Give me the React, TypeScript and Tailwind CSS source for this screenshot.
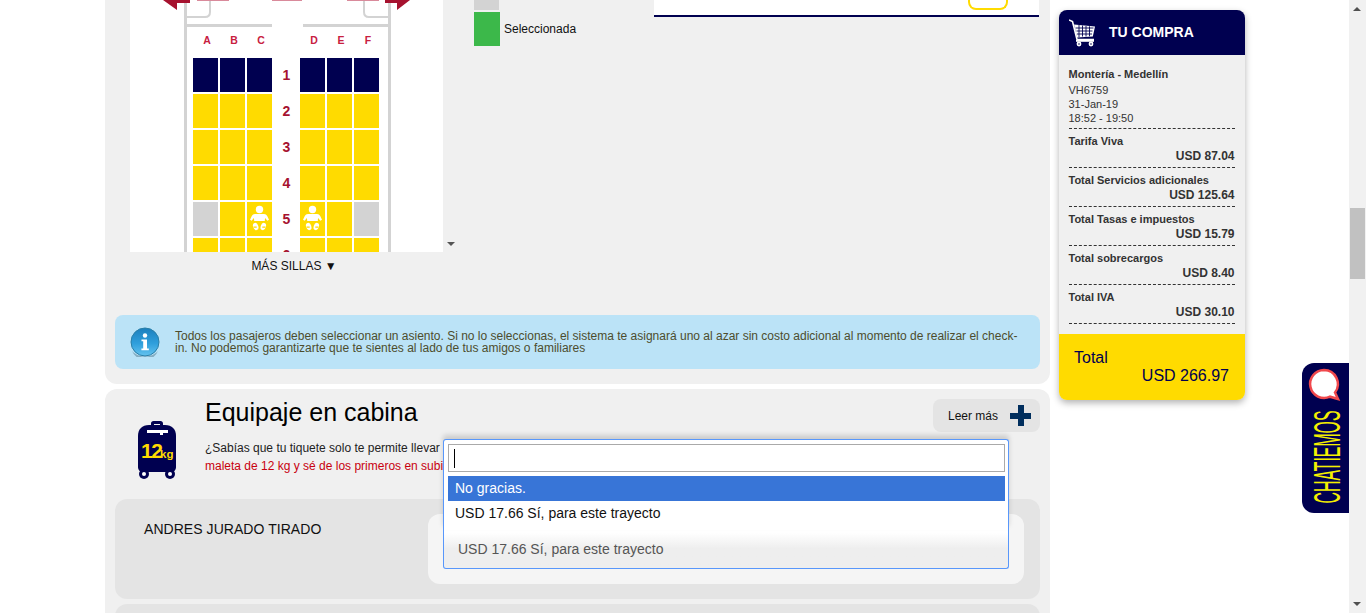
import React from 'react'

const NAVY = 'bg-[#000050]'

// Filas del mapa de sillas: n = azul, y = amarilla, g = gris, b = bebé
const rows = [
  { num: '1', seats: ['n', 'n', 'n', 'n', 'n', 'n'] },
  { num: '2', seats: ['y', 'y', 'y', 'y', 'y', 'y'] },
  { num: '3', seats: ['y', 'y', 'y', 'y', 'y', 'y'] },
  { num: '4', seats: ['y', 'y', 'y', 'y', 'y', 'y'] },
  { num: '5', seats: ['g', 'y', 'b', 'b', 'y', 'g'] },
  { num: '6', seats: ['y', 'y', 'y', 'y', 'y', 'y'] },
]

const totals = [
  { label: 'Tarifa Viva', value: 'USD 87.04' },
  { label: 'Total Servicios adicionales', value: 'USD 125.64' },
  { label: 'Total Tasas e impuestos', value: 'USD 15.79' },
  { label: 'Total sobrecargos', value: 'USD 8.40' },
  { label: 'Total IVA', value: 'USD 30.10' },
]

function Baby() {
  return (
    <svg width="25" height="34" viewBox="0 0 25 34" fill="white">
      <circle cx="12.500" cy="7.500" r="3.700" />
      <path d="M8 12h9c1.500 0 2.500.8 3.200 2l1.800 3.800-1.700.9-2.100-2.700c-.3 1.200-.4 2-.4 3H7.200c0-1-.1-1.800-.4-3l-2.100 2.700-1.700-.9L4.800 14C5.500 12.800 6.500 12 8 12z" />
      <ellipse cx="8.700" cy="24.500" rx="2.600" ry="3.800" transform="rotate(-18 8.700 24.500)" />
      <ellipse cx="16.300" cy="24.500" rx="2.600" ry="3.800" transform="rotate(18 16.300 24.500)" />
      <path d="M6.500 24.500h3.200v1.200H6.500zM15.300 24.500h3.200v1.200h-3.200z" fill="#ffdb00" />
    </svg>
  )
}

function Seat({ kind }: { kind: string }) {
  if (kind === 'n') return <div className="h-[34px] bg-[#000050]" />
  if (kind === 'g') return <div className="h-[34px] bg-[#d3d3d3]" />
  if (kind === 'b')
    return (
      <div className="h-[34px] bg-[#ffdb00]">
        <Baby />
      </div>
    )
  return <div className="h-[34px] bg-[#ffdb00]" />
}

function SeatMap() {
  return (
    <div className="h-[252px] w-[313px] shrink-0 overflow-hidden bg-white">
      {/* Cabecera del avión, cortada por el scroll */}
      <svg width="313" height="27" viewBox="0 0 313 27" className="block" fill="none">
        <path d="M55.500 0v27M259.500 0v27" stroke="#d3d3d3" strokeWidth="3" />
        <path d="M56 17h19c3 0 5-2 5-5V0M259 17h-20c-3 0-5-2-5-5V0" stroke="#d3d3d3" strokeWidth="2" />
        <path d="M55 25.500h87M173 25.500h86" stroke="#d3d3d3" strokeWidth="3" />
        <path d="M33 0l14 10V3h13V0z" fill="#a6122f" />
        <path d="M280 0l-13 10V3h-12V0z" fill="#a6122f" />
        <path d="M67 0h32v1H67zM142 0h30v1h-30zM217 0h32v1h-32z" fill="#d98a9b" />
      </svg>
      <div className="ml-[54px] w-[207px] border-x-[3px] border-[#d3d3d3] pl-[6px]">
        <div className="grid grid-cols-[25px_25px_25px_24px_25px_25px_25px] gap-[2px]">
          {['A', 'B', 'C', '', 'D', 'E', 'F'].map((l, i) => (
            <div key={i} className="flex h-[29px] items-center justify-center pb-[1px] pl-[3px] text-[10.500px] font-bold text-[#c8203f]">
              {l}
            </div>
          ))}
          {rows.map((r) => (
            <React.Fragment key={r.num}>
              {r.seats.slice(0, 3).map((s, i) => (
                <Seat key={i} kind={s} />
              ))}
              <div className="flex h-[34px] items-center justify-center pl-[1px] text-[14px] font-bold text-[#a6122f]">{r.num}</div>
              {r.seats.slice(3).map((s, i) => (
                <Seat key={i} kind={s} />
              ))}
            </React.Fragment>
          ))}
        </div>
      </div>
    </div>
  )
}

function Suitcase() {
  return (
    <svg width="38" height="58" viewBox="0 0 38 58" className="shrink-0">
      <path d="M13 5V2.500C13 1 14 0 15.500 0h7C24 0 25 1 25 2.500V5h-3V3h-6v2z" fill="#000050" />
      <path d="M11 4h16c7 0 11 4 11 11v31c0 3-2 5-5 5H5c-3 0-5-2-5-5V15C0 8 4 4 11 4z" fill="#000050" />
      <circle cx="6" cy="53" r="5" fill="#000050" />
      <circle cx="32" cy="53" r="5" fill="#000050" />
      <circle cx="6" cy="53" r="2" fill="white" />
      <circle cx="32" cy="53" r="2" fill="white" />
      <path d="M9 9h21v3h-5v2h-3v-2H9z" fill="white" />
      <text x="3" y="37" fill="#ffdb00" fontFamily="'Liberation Sans', sans-serif" fontSize="21" fontWeight="700" letterSpacing="-1.500">12</text>
      <text x="22" y="37" fill="#ffdb00" fontFamily="'Liberation Sans', sans-serif" fontSize="11.500" fontWeight="700">kg</text>
    </svg>
  )
}

function InfoIcon() {
  return (
    <svg width="30" height="30" viewBox="0 0 30 30" className="shrink-0">
      <defs>
        <linearGradient id="infoGrad" x1="0" y1="0" x2="0" y2="1">
          <stop offset="0" stopColor="#1c7fbd" />
          <stop offset="0.55" stopColor="#2f9fdc" />
          <stop offset="1" stopColor="#63c2ee" />
        </linearGradient>
      </defs>
      <circle cx="15" cy="15" r="14" fill="url(#infoGrad)" stroke="#2a7fa8" strokeWidth="1" />
      <path d="M2 24a14 14 0 0 0 26 0c-4 4-8 5.500-13 5.500S6 28 2 24z" fill="#50788c" opacity="0.5" />
      <circle cx="15" cy="8.500" r="2.200" fill="white" />
      <path d="M11.500 12.500h5.500v9h1.800v1.800h-7.400v-1.800h1.800v-7.200h-1.700z" fill="white" />
    </svg>
  )
}

function Cart() {
  return (
    <svg width="27" height="28" viewBox="0 0 27 28" fill="none" className="shrink-0">
      <path d="M0 1l3.500 1.500L8 20.500h17" stroke="white" strokeWidth="1.600" />
      <path d="M5 5.500l21 2-2.200 10L8 18.500z" fill="white" />
      <path d="M6.500 9h18M7.500 12h16M8 15h15M10 6v12M13.500 6.500v11M17 7v10.500M20.500 7.300v10" stroke="#000050" strokeWidth="0.900" />
      <rect x="7" y="21" width="18" height="1.800" fill="white" />
      <circle cx="10" cy="25" r="2.400" fill="white" />
      <circle cx="22" cy="25" r="2.400" fill="white" />
      <circle cx="10" cy="25" r="0.800" fill="#000050" />
      <circle cx="22" cy="25" r="0.800" fill="#000050" />
    </svg>
  )
}

function Purchase() {
  return (
    <aside className="mt-[10px] h-[390px] w-[186px] shrink-0 overflow-hidden rounded-lg bg-[#f0f0f0] shadow-[0_3px_7px_rgba(0,0,0,0.3)]">
      <div className={`flex h-[45px] items-center gap-[13px] pl-[10px] ${NAVY}`}>
        <Cart />
        <span className="text-[14px] font-bold text-white">TU COMPRA</span>
      </div>
      <div className="h-[279px] pl-[9.500px] pr-[10.500px] pt-[13px] text-[#333]">
        <div className="border-b border-dashed border-[#333] pb-[3px] text-[11px] leading-[14px]">
          <div className="mb-[2px] font-bold leading-[13px]">Montería - Medellín</div>
          <div>VH6759</div>
          <div>31-Jan-19</div>
          <div>18:52 - 19:50</div>
        </div>
        {totals.map((t) => (
          <div key={t.label} className="h-[39px] border-b border-dashed border-[#333] pt-[6px]">
            <div className="text-[11px] font-bold leading-[13px]">{t.label}</div>
            <div className="mt-[1px] text-right text-[12px] font-bold leading-[15px]">{t.value}</div>
          </div>
        ))}
      </div>
      <div className="h-[66px] bg-[#ffdb00] pl-[15px] pr-[16px] pt-[15px] text-[16px] leading-[18px] text-[#000050]">
        <div>Total</div>
        <div className="text-right">USD 266.97</div>
      </div>
    </aside>
  )
}

function SelectOverlay() {
  return (
    <div className="absolute bottom-[39px] left-0 right-0 z-10 h-[91px] rounded-t-[3px] border border-b-0 border-[#5897fb] bg-white pl-[4px] pr-[3px] pt-[4px] shadow-[0_-4px_5px_rgba(0,0,0,0.15)]">
      <div className="flex h-[28px] items-center border border-[#aaa] bg-white pl-[5px]">
        <span className="h-[19px] w-px bg-black" />
      </div>
      <div className="mt-[4px] flex h-[25px] items-center bg-[#3875d7] pl-[7px] text-[14px] text-white">No gracias.</div>
      <div className="flex h-[25px] items-center pl-[7px] text-[14px] text-[#111]">USD 17.66 Sí, para este trayecto</div>
    </div>
  )
}

export default function App() {
  return (
    <div className="flex h-[613px] overflow-hidden bg-white font-['Liberation_Sans',Arial,sans-serif]">
      <div className="relative flex flex-1 gap-[9px] pl-[105px]">
        <main className="flex w-[945px] shrink-0 flex-col gap-[5px]">
          <section className="h-[384px] shrink-0 rounded-b-xl bg-[#f0f0f0] px-[10px]">
            <div className="flex h-[252px] pl-[15px]">
              <SeatMap />
              <div className="relative w-[31px] shrink-0">
                <span className="absolute bottom-[6px] left-[4px] h-0 w-0 border-x-[4px] border-t-[4px] border-x-transparent border-t-[#555]" />
              </div>
              <div className="w-[180px] shrink-0">
                <div className="h-[10px] w-[25px] bg-[#d3d3d3]" />
                <div className="mt-[2px] flex items-center gap-[4px] text-[12px] text-[#111]">
                  <div className="h-[34px] w-[26px] bg-[#3cb84a]" />
                  Seleccionada
                </div>
              </div>
              <div className="mr-px h-[17px] flex-1 border-b-2 border-[#000050] bg-white pl-[314px]">
                <div className="h-[10px] w-[40px] rounded-b-lg border-2 border-t-0 border-[#ffdb00]" />
              </div>
            </div>
            <div className="w-[358px] pt-[7px] text-center text-[12px] leading-[14px] text-[#111]">MÁS SILLAS ▼</div>
            <div className="mt-[42px] flex h-[54px] items-center gap-[15px] rounded-lg bg-[#bbe3f7] px-[15px] text-[12px] leading-[12px] text-[#4d4d2d]">
              <InfoIcon />
              <p className="w-[850px]">
                Todos los pasajeros deben seleccionar un asiento. Si no lo seleccionas, el sistema te asignará uno al azar sin costo adicional al momento de realizar el check-in. No podemos garantizarte que te sientes al lado de tus amigos o familiares
              </p>
            </div>
          </section>

          <section className="flex-1 rounded-t-xl bg-[#f0f0f0] px-[10px] pt-[10px]">
            <div className="flex h-[100px]">
              <div className="w-[90px] shrink-0 pl-[23px] pt-[22px]">
                <Suitcase />
              </div>
              <div className="flex-1">
                <h2 className="text-[25px] leading-[26px] text-black">Equipaje en cabina</h2>
                <p className="mt-[14px] h-[36px] overflow-hidden text-[12px] leading-[18px] text-[#222]">
                  ¿Sabías que tu tiquete solo te permite llevar
                  <br />
                  <span className="text-[#c8000f]">maleta de 12 kg y sé de los primeros en subir</span>
                </p>
              </div>
              <div className="flex h-[33px] w-[107px] shrink-0 items-center justify-between rounded-lg bg-[#e4e4e4] pl-[15px] pr-[9px] text-[12px] text-[#111]">
                Leer más
                <span className="relative h-[21px] w-[21px]">
                  <span className="absolute left-[7.500px] top-0 h-[21px] w-[6px] bg-[#002e5d]" />
                  <span className="absolute left-0 top-[7.500px] h-[6px] w-[21px] bg-[#002e5d]" />
                </span>
              </div>
            </div>
            <div className="flex h-[100px] justify-between rounded-xl bg-[#e4e4e4] py-[15px] pl-[29px] pr-[16px]">
              <div className="pt-[7px] text-[14px] leading-[16px] tracking-[0.05px] text-[#111]">ANDRES JURADO TIRADO</div>
              <div className="h-[70px] w-[596px] rounded-xl bg-[#f5f5f5] px-[15px] pt-[15px]">
                <div className="relative">
                  <SelectOverlay />
                  <div className="flex h-[40px] items-center rounded-b-[3px] border border-t-0 border-[#5897fb] bg-gradient-to-b from-white from-[10%] to-[#eeeeee] to-[50%] pl-[14px] pt-[1px] text-[14px] text-[#555]">
                    USD 17.66 Sí, para este trayecto
                  </div>
                </div>
              </div>
            </div>
            <div className="mt-[5px] h-[40px] rounded-xl bg-[#e4e4e4]" />
          </section>
        </main>

        <Purchase />

        {/* Pestaña del chat, fija sobre la página */}
        <div className={`absolute right-0 top-[363px] h-[150px] w-[47px] overflow-hidden rounded-l-xl ${NAVY}`}>
          <svg width="36" height="36" viewBox="0 0 36 36" className="absolute left-[5px] top-[4px]">
            <path d="M17 3a14 14 0 1 0 6 26.700L31 32l-3-6.500A14 14 0 0 0 17 3z" fill="white" stroke="#f0484c" strokeWidth="2.500" />
          </svg>
          <span className="absolute left-[-81px] top-[76px] w-[214px] text-center text-[36px] leading-[36px] text-[#f5f000] [transform:rotate(-90deg)_scaleX(0.44)]">
            CHATIEMOS
          </span>
        </div>
      </div>

      {/* Barra de scroll */}
      <div className="relative w-[17px] shrink-0 bg-[#f1f1f1]">
        <span className="absolute left-[4px] top-[7px] h-0 w-0 border-x-[4px] border-b-[4px] border-x-transparent border-b-[#505050]" />
        <div className="absolute left-0 right-0 top-[208px] mx-[1px] h-[71px] bg-[#c1c1c1]" />
        <span className="absolute left-[4px] top-[602px] h-0 w-0 border-x-[4px] border-t-[4px] border-x-transparent border-t-[#505050]" />
      </div>
    </div>
  )
}
